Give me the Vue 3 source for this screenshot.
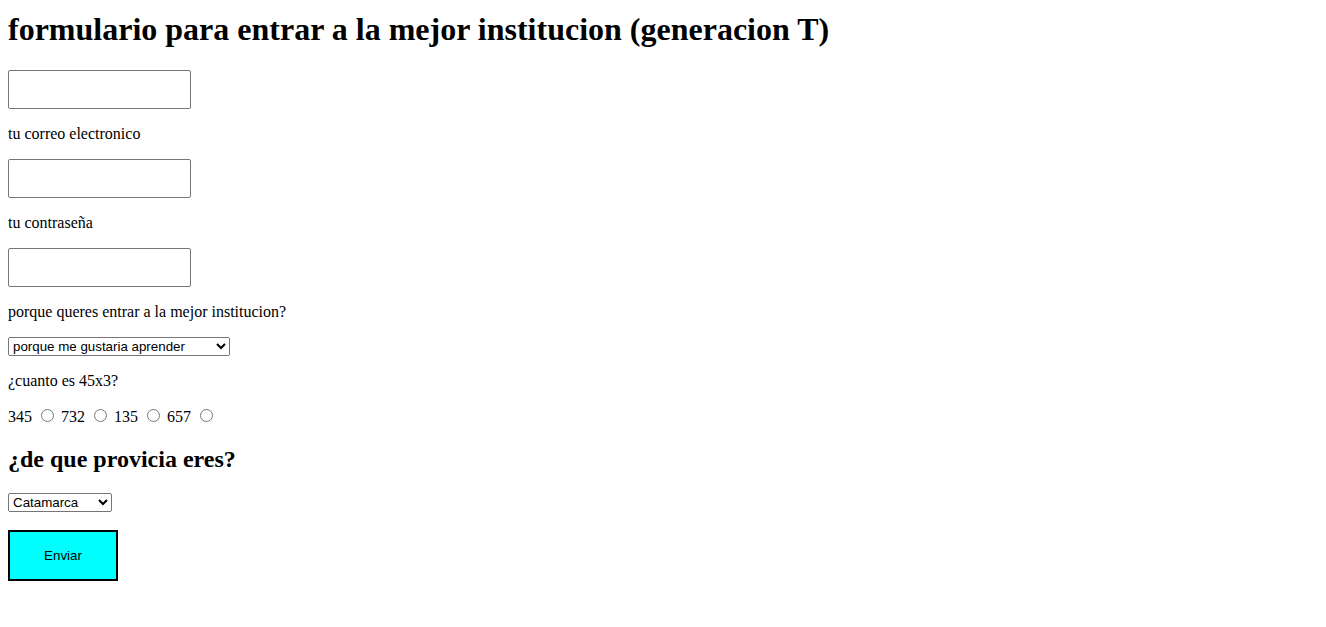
<script setup>
import { ref } from 'vue'

const reason = ref('porque me gustaria aprender')
const province = ref('Catamarca')
const answer = ref('')
const answers = ['345', '732', '135', '657']
</script>

<template>
  <main class="page">
    <h1>formulario para entrar a la mejor institucion (generacion T)</h1>
    <form @submit.prevent>
      <input class="field" type="text" aria-label="nombre" />
      <p><label for="email">tu correo electronico</label></p>
      <input id="email" class="field" type="email" />
      <p><label for="password">tu contraseña</label></p>
      <input id="password" class="field" type="password" />
      <p><label for="reason">porque queres entrar a la mejor institucion?</label></p>
      <select id="reason" v-model="reason" class="reason">
        <option>porque me gustaria aprender</option>
      </select>
      <p id="sum">¿cuanto es 45x3?</p>
      <div class="answers" role="radiogroup" aria-labelledby="sum">
        <label v-for="a in answers" :key="a">{{ a }} <input v-model="answer" type="radio" name="answer" :value="a" /></label>
      </div>
      <h2><label for="province">¿de que provicia eres?</label></h2>
      <select id="province" v-model="province" class="province">
        <option>Catamarca</option>
      </select>
      <button type="submit">Enviar</button>
    </form>
  </main>
</template>

<style>
body {
  margin: 0;
  background: #fff;
}
</style>

<style scoped>
.page {
  padding: 8px;
  color: #000;
  font: 16px/18px "Liberation Serif", "Times New Roman", serif;
}
h1 {
  margin: 0 0 20px;
  font-size: 32px;
  line-height: 42px;
}
form {
  display: flex;
  flex-direction: column;
  align-items: flex-start;
}
.field {
  box-sizing: border-box;
  width: 183px;
  height: 39px;
  border: 1px solid #767676;
  border-radius: 2px;
  padding: 1px 10px;
}
p {
  margin: 16px 0;
}
select {
  box-sizing: border-box;
  height: 19px;
  font-family: "Liberation Sans", Arial, sans-serif;
}
.reason {
  width: 222px;
}
.province {
  width: 104px;
}
.answers {
  display: flex;
  gap: 4px;
}
input[type='radio'] {
  margin: 3px 3px 0 5px;
}
h2 {
  margin: 19px 0 20px;
  font-size: 24px;
  line-height: 28px;
}
button {
  box-sizing: border-box;
  width: 110px;
  height: 51px;
  margin-top: 18px;
  border: 2px solid #000;
  background: aqua;
  color: #000;
  font-family: "Liberation Sans", Arial, sans-serif;
}
</style>
